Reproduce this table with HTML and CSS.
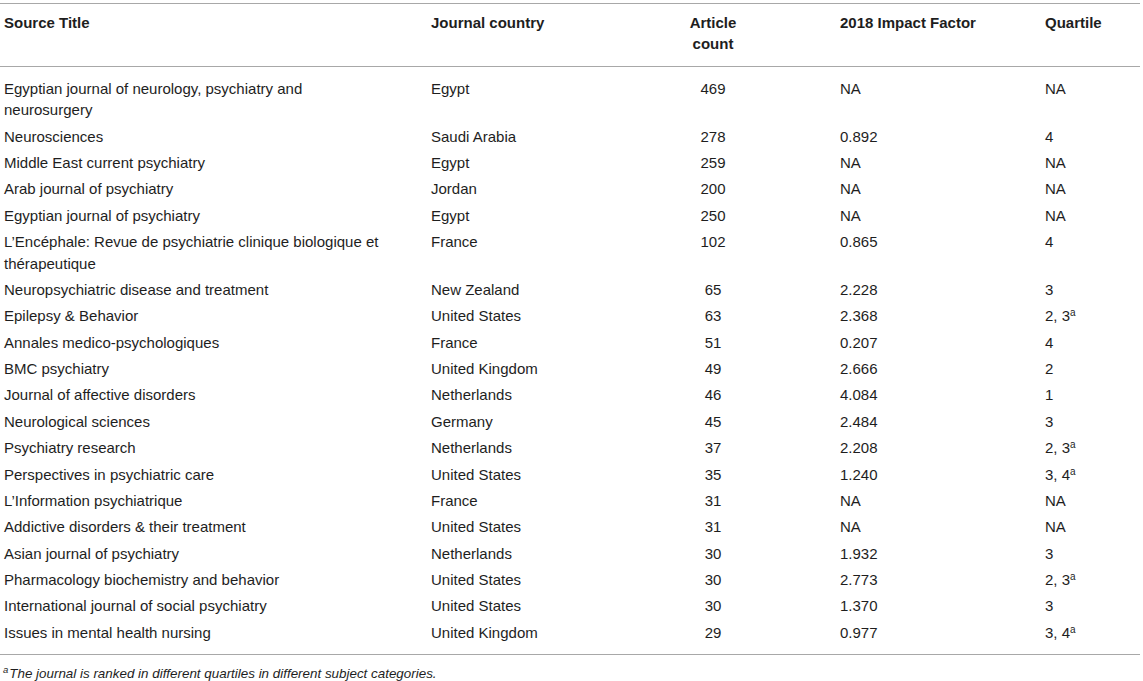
FILE: index.html
```html
<!DOCTYPE html>
<html lang="en">
<head>
<meta charset="utf-8">
<title>Journals</title>
<link rel="stylesheet" href="styles.css">
</head>
<body>
<div class="page">
<table class="data">
  <colgroup>
    <col class="c-title">
    <col class="c-country">
    <col class="c-count">
    <col class="c-if">
    <col class="c-q">
  </colgroup>
  <thead>
    <tr>
      <th class="title">Source Title</th>
      <th>Journal country</th>
      <th class="num">Article<br>count</th>
      <th>2018 Impact Factor</th>
      <th>Quartile</th>
    </tr>
  </thead>
  <tbody>
    <tr><td class="title">Egyptian journal of neurology, psychiatry and neurosurgery</td><td>Egypt</td><td class="num">469</td><td>NA</td><td>NA</td></tr>
    <tr><td class="title">Neurosciences</td><td>Saudi Arabia</td><td class="num">278</td><td>0.892</td><td>4</td></tr>
    <tr><td class="title">Middle East current psychiatry</td><td>Egypt</td><td class="num">259</td><td>NA</td><td>NA</td></tr>
    <tr><td class="title">Arab journal of psychiatry</td><td>Jordan</td><td class="num">200</td><td>NA</td><td>NA</td></tr>
    <tr><td class="title">Egyptian journal of psychiatry</td><td>Egypt</td><td class="num">250</td><td>NA</td><td>NA</td></tr>
    <tr><td class="title">L’Encéphale: Revue de psychiatrie clinique biologique et thérapeutique</td><td>France</td><td class="num">102</td><td>0.865</td><td>4</td></tr>
    <tr><td class="title">Neuropsychiatric disease and treatment</td><td>New Zealand</td><td class="num">65</td><td>2.228</td><td>3</td></tr>
    <tr><td class="title">Epilepsy &amp; Behavior</td><td>United States</td><td class="num">63</td><td>2.368</td><td>2, 3<sup>a</sup></td></tr>
    <tr><td class="title">Annales medico-psychologiques</td><td>France</td><td class="num">51</td><td>0.207</td><td>4</td></tr>
    <tr><td class="title">BMC psychiatry</td><td>United Kingdom</td><td class="num">49</td><td>2.666</td><td>2</td></tr>
    <tr><td class="title">Journal of affective disorders</td><td>Netherlands</td><td class="num">46</td><td>4.084</td><td>1</td></tr>
    <tr><td class="title">Neurological sciences</td><td>Germany</td><td class="num">45</td><td>2.484</td><td>3</td></tr>
    <tr><td class="title">Psychiatry research</td><td>Netherlands</td><td class="num">37</td><td>2.208</td><td>2, 3<sup>a</sup></td></tr>
    <tr><td class="title">Perspectives in psychiatric care</td><td>United States</td><td class="num">35</td><td>1.240</td><td>3, 4<sup>a</sup></td></tr>
    <tr><td class="title">L’Information psychiatrique</td><td>France</td><td class="num">31</td><td>NA</td><td>NA</td></tr>
    <tr><td class="title">Addictive disorders &amp; their treatment</td><td>United States</td><td class="num">31</td><td>NA</td><td>NA</td></tr>
    <tr><td class="title">Asian journal of psychiatry</td><td>Netherlands</td><td class="num">30</td><td>1.932</td><td>3</td></tr>
    <tr><td class="title">Pharmacology biochemistry and behavior</td><td>United States</td><td class="num">30</td><td>2.773</td><td>2, 3<sup>a</sup></td></tr>
    <tr><td class="title">International journal of social psychiatry</td><td>United States</td><td class="num">30</td><td>1.370</td><td>3</td></tr>
    <tr><td class="title">Issues in mental health nursing</td><td>United Kingdom</td><td class="num">29</td><td>0.977</td><td>3, 4<sup>a</sup></td></tr>
  </tbody>
</table>
<p class="footnote"><sup>a</sup>The journal is ranked in different quartiles in different subject categories.</p>
</div>
</body>
</html>
```
FILE: styles.css
```css
html, body {
  margin: 0;
  padding: 0;
  background: #ffffff;
}

body {
  font-family: "Liberation Sans", Arial, Helvetica, sans-serif;
  color: #1e1e1e;
}

.page {
  padding-top: 3px;
  width: 1140px;
}

.data {
  width: 1140px;
  table-layout: fixed;
  border-collapse: collapse;
  font-size: 15px;
  line-height: 21.5px;
}

.c-title { width: 427px; }
.c-country { width: 163px; }
.c-count { width: 246px; }
.c-if { width: 205px; }
.c-q { width: 99px; }

.data th,
.data td {
  text-align: left;
  vertical-align: top;
  padding: 2.45px 4px;
}

.data th {
  font-weight: bold;
  padding-top: 7.6px;
  padding-bottom: 11.4px;
  border-top: 1px solid #a8a8a8;
  border-bottom: 1px solid #a8a8a8;
}

.data .title {
  padding-right: 44px;
}

.data .num {
  text-align: center;
}

.data tbody tr:first-child td {
  padding-top: 10.7px;
}

.data tbody tr:last-child td {
  padding-bottom: 10.6px;
  border-bottom: 1px solid #a8a8a8;
}

.data sup {
  font-size: 10px;
  line-height: 0;
  vertical-align: 5px;
}

.footnote {
  margin: 11px 0 0 0;
  padding-left: 3px;
  font-size: 13.4px;
  line-height: 16px;
  font-style: italic;
}

.footnote sup {
  font-size: 9.5px;
  line-height: 0;
  vertical-align: 5px;
  margin-right: 1px;
}
```
